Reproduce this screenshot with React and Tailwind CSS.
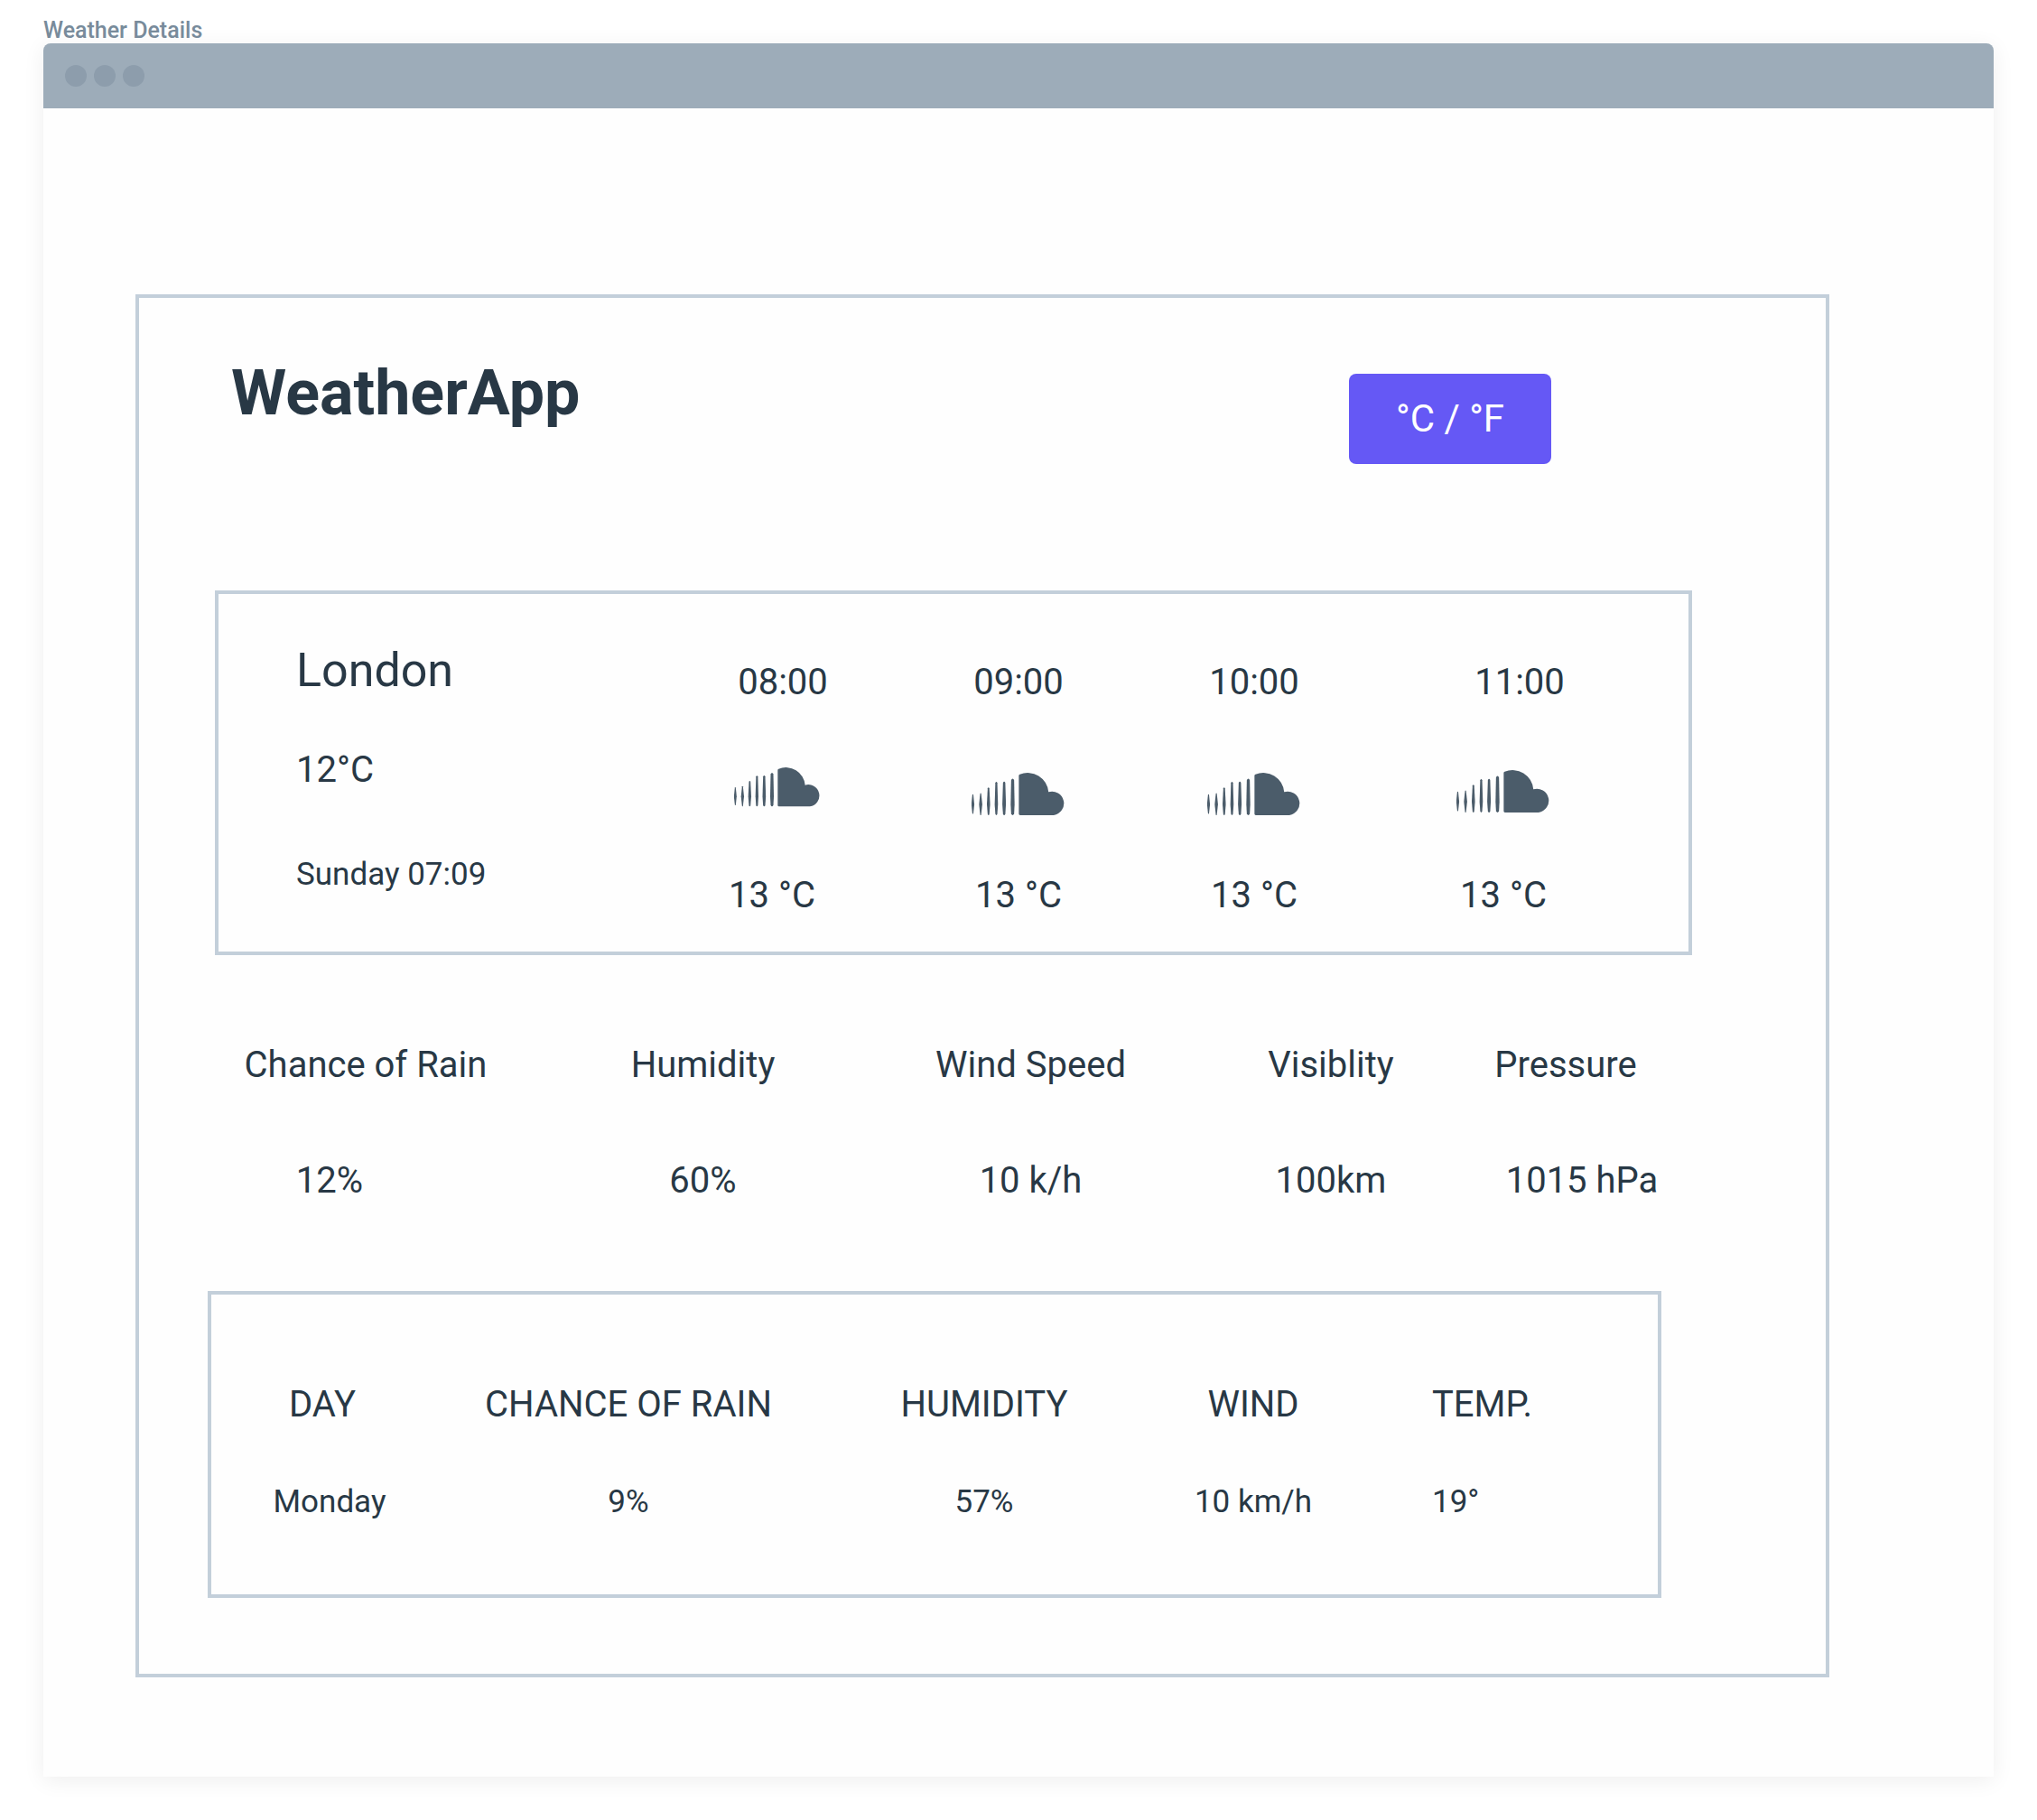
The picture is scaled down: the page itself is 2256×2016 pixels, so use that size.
const hours = [
  { time: "08:00", temp: "13 °C", timeClass: "pl-6", iconClass: "w-24 self-start ml-3" },
  { time: "09:00", temp: "13 °C", timeClass: "", iconClass: "w-[104px] self-end" },
  { time: "10:00", temp: "13 °C", timeClass: "", iconClass: "w-[104px] self-end" },
  { time: "11:00", temp: "13 °C", timeClass: "pl-9", iconClass: "w-[104px] self-center" },
];

const metrics = [
  { label: "Chance of Rain", value: "12%", valueClass: "pr-20" },
  { label: "Humidity", value: "60%", valueClass: "" },
  { label: "Wind Speed", value: "10 k/h", valueClass: "" },
  { label: "Visiblity", value: "100km", valueClass: "" },
  { label: "Pressure", value: "1015 hPa", valueClass: "pl-9" },
];

// centre x, top y, bottom y, half width at the tips, half width in the middle
const bars = [
  [4, 66, 126, 1.5, 4.5],
  [28, 62, 130, 1.5, 5],
  [52, 45, 130, 2.5, 5],
  [76, 28, 130, 3, 5],
  [100, 27, 130, 3.5, 5.5],
  [126, 18, 130, 4.5, 6],
];

function CloudIcon({ className }) {
  return (
    <svg viewBox="0 0 288 131" className={className} fill="#4b5c6a" aria-hidden="true">
      {bars.map(([c, top, bottom, t, w]) => (
        <path
          key={c}
          d={`M${c - t} ${top + t}Q${c} ${top - t} ${c + t} ${top + t}L${c + w} 97L${c + t} ${bottom - t}Q${c} ${bottom + t} ${c - t} ${bottom - t}L${c - w} 97Z`}
        />
      ))}
      <path d="M145 9Q145 6 148 5A64 64 0 0 1 236 59A36.5 36.5 0 1 1 252 130H149Q145 130 145 126Z" />
    </svg>
  );
}

function Hour({ time, temp, timeClass, iconClass }) {
  return (
    <li className="flex flex-col items-center pt-[74px]">
      <time className={`text-[40px] leading-12 ${timeClass}`}>{time}</time>
      <div className="mt-[70px] flex h-[53px]">
        <CloudIcon className={iconClass} />
      </div>
      <span className="mt-[65px] text-[40px] leading-12">{temp}</span>
    </li>
  );
}

export default function App() {
  return (
    <div className="min-h-screen bg-white px-12 pt-5 pb-12 font-['Roboto','Liberation_Sans',sans-serif] whitespace-nowrap text-[#283845]">
      <p className="text-[25px] leading-7 font-medium text-[#788b9b]">Weather Details</p>

      <div className="rounded-t-lg bg-[#fefefe] pb-[110px] shadow-[0_4px_24px_rgba(0,0,0,0.07)]">
        <div className="flex h-[72px] items-center gap-2 rounded-t-lg bg-[#9dacb9] pl-6">
          <span className="size-6 rounded-full bg-[#8d9dac]" />
          <span className="size-6 rounded-full bg-[#8d9dac]" />
          <span className="size-6 rounded-full bg-[#8d9dac]" />
        </div>

        <main className="mt-[206px] mr-[182px] ml-[102px] border-4 border-[#c3cfda] pt-[65px] pb-[84px]">
          <header className="mr-[304px] ml-[102px] flex items-start justify-between">
            <h1 className="text-[70px] leading-20 font-bold">WeatherApp</h1>
            <button
              type="button"
              className="mt-[19px] h-[100px] w-56 rounded-lg bg-[#6558f5] text-[42px] leading-12 text-white"
            >
              °C / °F
            </button>
          </header>

          <section className="mt-[140px] mr-[148px] ml-[84px] grid grid-cols-[397fr_1098fr] border-4 border-[#c3cfda] pr-[47px] pb-[38px] pl-[86px]">
            <div className="pt-[55px]">
              <h2 className="text-[52px] leading-15">London</h2>
              <p className="mt-14 text-[40px] leading-12">12°C</p>
              <p className="mt-[70px] text-[35px] leading-11">Sunday 07:09</p>
            </div>
            <ul className="grid grid-cols-[260fr_286fr_236fr_316fr]">
              {hours.map((h) => (
                <Hour key={h.time} {...h} />
              ))}
            </ul>
          </section>

          <dl className="mt-[98px] mr-[186px] ml-[66px] grid grid-cols-[minmax(0,370fr)_minmax(0,377fr)_minmax(0,349fr)_minmax(0,316fr)_minmax(0,204fr)] text-center text-[40px] leading-12">
            {metrics.map((m) => (
              <div key={m.label} className="flex flex-col items-center gap-20">
                <dt>{m.label}</dt>
                <dd className={m.valueClass}>{m.value}</dd>
              </div>
            ))}
          </dl>

          <section className="mt-[98px] mr-[182px] ml-[76px] border-4 border-[#c3cfda] pt-[98px] pb-20">
            <table className="w-full table-fixed text-center">
              <colgroup>
                <col className="w-[262px]" />
                <col className="w-[400px]" />
                <col className="w-[388px]" />
                <col className="w-[208px]" />
                <col className="w-[344px]" />
              </colgroup>
              <thead className="text-[40px] leading-12">
                <tr>
                  <th scope="col" className="pr-4 font-normal">DAY</th>
                  <th scope="col" className="font-normal">CHANCE OF RAIN</th>
                  <th scope="col" className="font-normal">HUMIDITY</th>
                  <th scope="col" className="font-normal">WIND</th>
                  <th scope="col" className="pl-[94px] text-left font-normal">TEMP.</th>
                </tr>
              </thead>
              <tbody className="text-[35px] leading-11">
                <tr>
                  <td className="pt-[62px]">Monday</td>
                  <td className="pt-[62px]">9%</td>
                  <td className="pt-[62px]">57%</td>
                  <td className="pt-[62px]">10 km/h</td>
                  <td className="pt-[62px] pl-[94px] text-left">19°</td>
                </tr>
              </tbody>
            </table>
          </section>
        </main>
      </div>
    </div>
  );
}
